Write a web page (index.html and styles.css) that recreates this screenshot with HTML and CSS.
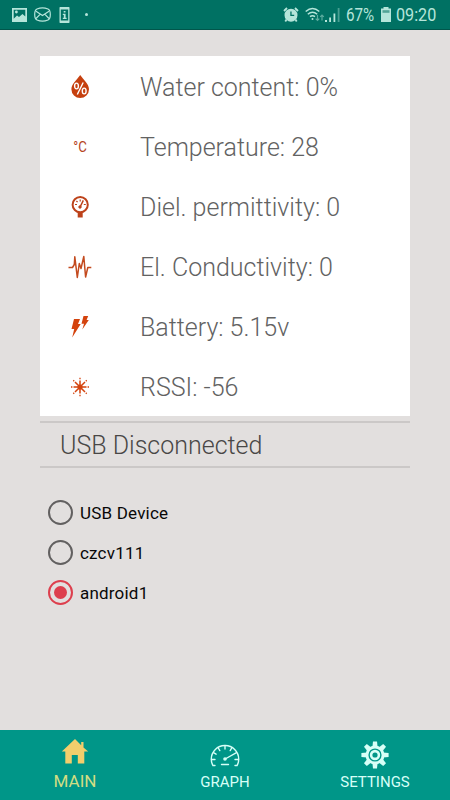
FILE: index.html
```html
<!DOCTYPE html>
<html lang="en">
<head>
<meta charset="utf-8">
<title>Sensor monitor</title>
<link rel="stylesheet" href="styles.css">
</head>
<body>
<div class="app">
  <header class="status">
    <div class="status-left">
      <svg width="15" height="14" viewBox="0 0 15 14"><path fill="currentColor" fill-rule="evenodd" d="M0 0h15v14H0zM1.700 1.700v9L5 7.500l2 1.600 3.500-3.200 2.800 2.700V1.700zM3 4a1.400 1.400 0 1 0 2.800 0A1.400 1.400 0 0 0 3 4z"/></svg>
      <svg width="17" height="15" viewBox="0 0 17 15" fill="none" stroke="currentColor" stroke-width="1.200"><path d="M3 2Q8.500-.4 14 2 16.300 3 16.300 7.500T14 13Q8.500 15.400 3 13 .7 12 .7 7.500T3 2z"/><path d="M2 4.300 8.500 8.500 15 4.300M2 11.500l4.300-4.300M15 11.500l-4.300-4.300"/></svg>
      <svg width="11" height="16" viewBox="0 0 11 16"><path fill="currentColor" fill-rule="evenodd" d="M1 0h9l.5.5v15l-.5.500H1l-.5-.5V.5zM1.800 2.500v11h7.400v-11zM4.700 4h1.800v1.600H4.700zM3.800 6.700h2.800v4h1v1.200H3.800v-1.200h1V8h-1z"/></svg>
      <i class="dot"></i>
    </div>
    <div class="status-right">
      <svg width="16" height="16" viewBox="0 0 16 16"><path d="M3.500 12.500l-1.200 2M12.500 12.500l1.200 2M1 4l3-3M15 4l-3-3" stroke="currentColor" stroke-width="1.800"/><path fill="currentColor" fill-rule="evenodd" d="M8 1.700a6.500 6.500 0 1 0 0 13 6.500 6.500 0 0 0 0-13zM7.300 4.500h1.300v3.300h2.600v1.300H7.300z"/></svg>
      <svg class="wifi" width="20" height="15" viewBox="0 0 20 15" fill="none" stroke="currentColor" stroke-width="1.500"><path d="M.7 4.500q6.800-6 13.600 0M2.800 7.200q4.700-4 9.400 0M5 9.700q2.500-2 5 0"/><circle cx="7.500" cy="12" r="1" fill="currentColor" stroke="none"/><path opacity=".5" stroke-width="1.200" d="M12.500 8v5.500M10.700 11.700l1.800 1.800 1.800-1.800M17 13.500V8M15.200 9.800 17 8l1.800 1.800"/></svg>
      <svg class="signal" width="15" height="15" viewBox="0 0 15 15" fill="currentColor"><path d="M0 13h2v2H0zM4.200 10.500H6V15H4.200zM8.500 6.500h1.800V15H8.500z"/><path opacity=".4" d="M12.700 1h1.800v14h-1.800z"/></svg>
      <span class="cond pct">67%</span>
      <svg class="battery" width="10" height="15" viewBox="0 0 10 15" fill="currentColor"><path d="M2.500 0h5v1.500H10V15H0V1.500h2.500z"/><path fill="#00705f" opacity=".55" d="M1.500 3.200h7v2.600h-7z"/></svg>
      <span class="cond time">09:20</span>
    </div>
  </header>
  <main>
    <section class="card">
      <div class="row"><svg class="ico" viewBox="0 0 24 24"><path fill="#c6400f" d="M12.200 0C9.500 4 3.400 9 3.400 14.200a8.800 8.800 0 0 0 17.600 0C21 9 15 4 12.200 0z"/><g fill="none" stroke="#fff" stroke-width="1.400"><ellipse cx="8.500" cy="11" rx="1.900" ry="2.900"/><ellipse cx="16.200" cy="16" rx="1.900" ry="2.900"/><path d="M15.200 7.500 9.300 19.500"/></g></svg><span>Water content: 0%</span></div>
      <div class="row"><span class="ico unit"><span>°C</span></span><span>Temperature: 28</span></div>
      <div class="row"><svg class="ico" viewBox="0 0 24 24" fill="none" stroke="#bd421a"><circle cx="12.200" cy="9.700" r="7.600" stroke-width="2"/><path stroke-width="1.200" d="M7 9.500h2M15.800 9.500h2M12.200 4.500v2M8.400 6l1.200 1.200"/><path stroke-width="1.500" d="M15.300 5.400 12.300 11.500"/><circle cx="12" cy="12" r="1.200" fill="#bd421a"/><path fill="#bd421a" stroke="none" d="M9.700 17h5v5.500h-5z"/></svg><span>Diel. permittivity: 0</span></div>
      <div class="row"><svg class="ico" viewBox="0 0 24 24" fill="none" stroke="#c34a1e" stroke-width="1.500" stroke-linejoin="round"><path d="M.5 12.500h4l1.800-3 .5-7.700L9.300 22.500l2-14 1.700 5 2.800-12 1.800 20.500L19.800 12.500h3.500"/></svg><span>El. Conductivity: 0</span></div>
      <div class="row"><svg class="ico" viewBox="0 0 24 24" fill="#d4430d"><path d="M6 4h6L10 9h2.700L4.200 22.500l2-8.500H3.500zM15.500 1h4.700l-1.600 4h2.200l-6.500 9.500L16 8.700h-2.500z"/></svg><span>Battery: 5.15v</span></div>
      <div class="row"><svg class="ico" viewBox="0 0 24 24" stroke="#d4430d" stroke-width="1.500"><path d="M12 5.500v13M5.500 12h13M7 7l10 10M17 7 7 17"/><path stroke-width="1.300" d="M12 2.800v1.400M12 19.800v1.400M3 12h1.400M19.600 12H21M5.300 5.300l.9.900M17.800 17.800l.9.900M18.700 5.300l-.9.900M6.200 17.800l-.9.900"/><circle cx="12" cy="12" r="1.800" fill="#d4430d"/></svg><span>RSSI: -56</span></div>
    </section>
    <div class="connection"><span>USB Disconnected</span></div>
    <div class="devices">
      <div class="device"><i class="radio"></i><span>USB Device</span></div>
      <div class="device"><i class="radio"></i><span>czcv111</span></div>
      <div class="device"><i class="radio on"></i><span>android1</span></div>
    </div>
  </main>
  <nav>
    <div class="tab active"><svg width="28" height="26" viewBox="0 0 28 26"><path fill="currentColor" d="M14 0 .8 12.500h3.500V24.500h6.500V16h6v8.500h6.500v-12h3.900L22.500 8.500V3h-2.300v3.300z"/></svg><span>MAIN</span></div>
    <div class="tab"><svg width="30" height="26" viewBox="0 0 30 26" fill="none" stroke="currentColor" stroke-width="1.400" stroke-linecap="round"><path d="M5 23.500H2.900A14 14 0 0 1 1.300 17 13.500 13.500 0 0 1 15 3.500 13.500 13.500 0 0 1 28.700 17a14 14 0 0 1-1.600 6.500H25M11.500 22.500h7"/><path d="M15 4v3M8.300 6l1.500 2.600M21.700 6l-1.500 2.600M3.500 10.700l2.600 1.500M1.500 17.500H5M25 17.500h3.500M16 16.500l10.500-5.800"/><circle cx="15" cy="17" r="1.100" fill="currentColor"/></svg><span>GRAPH</span></div>
    <div class="tab"><svg width="28" height="28" viewBox="-14 -14 28 28"><g fill="currentColor"><path id="tooth" d="M-2-13.600h4L2.600-8h-5.200z"/><use href="#tooth" transform="rotate(45)"/><use href="#tooth" transform="rotate(90)"/><use href="#tooth" transform="rotate(135)"/><use href="#tooth" transform="rotate(180)"/><use href="#tooth" transform="rotate(225)"/><use href="#tooth" transform="rotate(270)"/><use href="#tooth" transform="rotate(315)"/><circle r="9.500"/></g><circle r="5.900" fill="none" stroke="#009688" stroke-width="1.400"/><circle r="2.600" fill="#009688"/></svg><span>SETTINGS</span></div>
  </nav>
</div>
</body>
</html>
```
FILE: styles.css
```css
* { box-sizing: border-box; }
body { margin: 0; font-family: Roboto, sans-serif; }
svg { display: block; flex: none; }
.app {
  width: 450px; height: 800px; overflow: hidden;
  display: flex; flex-direction: column;
  background: #e2dfde;
}
.status {
  height: 30px; flex: none;
  display: flex; justify-content: space-between;
  background: #007163; color: #b5e5da;
  border-bottom: 1px solid #00564b;
}
.status-left { display: flex; align-items: center; gap: 6px; padding-left: 12px; }
.status-left svg:nth-child(2) { margin: 0 1px; }
.status-left svg:nth-child(3) { margin-left: 1px; }
.dot { width: 3px; height: 3px; border-radius: 50%; background: currentColor; margin-left: 9px; }
.status-right { display: flex; align-items: center; padding-right: 13px; }
.status-right > svg:first-child { margin-left: -2px; }
.wifi { margin-left: 6px; }
.signal { margin-left: 0; }
.battery { margin-left: 5px; }
.cond { display: block; font-size: 19px; line-height: 32px; white-space: nowrap; transform-origin: 0 50%; }
.pct { width: 30px; margin-left: 6px; transform: scaleX(.8); }
.time { width: 41px; margin-left: 5px; transform: scaleX(.85); }
main { flex: 1; padding: 26px 40px 0; }
.card { height: 360px; background: #fff; padding-top: 1px; }
.row {
  height: 60px; display: flex; align-items: center;
  padding-left: 28px; color: #626262;
  font-size: 25px; font-weight: 300; white-space: nowrap;
}
.ico { width: 24px; height: 24px; margin-right: 48px; }
.unit { color: #b5431d; font-size: 15px; line-height: 24px; text-align: center; font-weight: 400; }
.unit span { display: block; transform: scaleX(.88); }
.connection {
  height: 47px; margin-top: 5px; padding-left: 20px;
  border: solid #cbc8c7; border-width: 2px 0;
  display: flex; align-items: center;
  color: #494746; font-size: 25px; font-weight: 300;
}
.connection span { transform: translateY(1px); }
.devices { padding: 24.500px 0 0 7.500px; }
.device { height: 40px; display: flex; align-items: center; color: #080808; font-size: 17px; letter-spacing: .2px; }
.device span { transform: translateY(-.5px); }
.radio {
  width: 25px; height: 25px; margin-right: 7.500px;
  border: 2.500px solid #626060; border-radius: 50%;
  display: grid; place-items: center;
}
.on { border-color: #dd3f4d; }
.on::after { content: ""; width: 13px; height: 13px; border-radius: 50%; background: #dd3f4d; }
nav { height: 70px; flex: none; display: grid; grid-template-columns: repeat(3, 1fr); background: #009688; }
.tab { display: flex; flex-direction: column; align-items: center; padding-top: 11px; color: #d7fff7; font-size: 15px; }
.tab svg { height: 28px; }
.tab span { line-height: 20px; margin-top: 3px; }
.active { padding-top: 9px; color: #f3ce6c; font-size: 17px; }
.active svg { height: 26px; }
.active span { color: #d2dd83; margin-top: 6px; }
```
